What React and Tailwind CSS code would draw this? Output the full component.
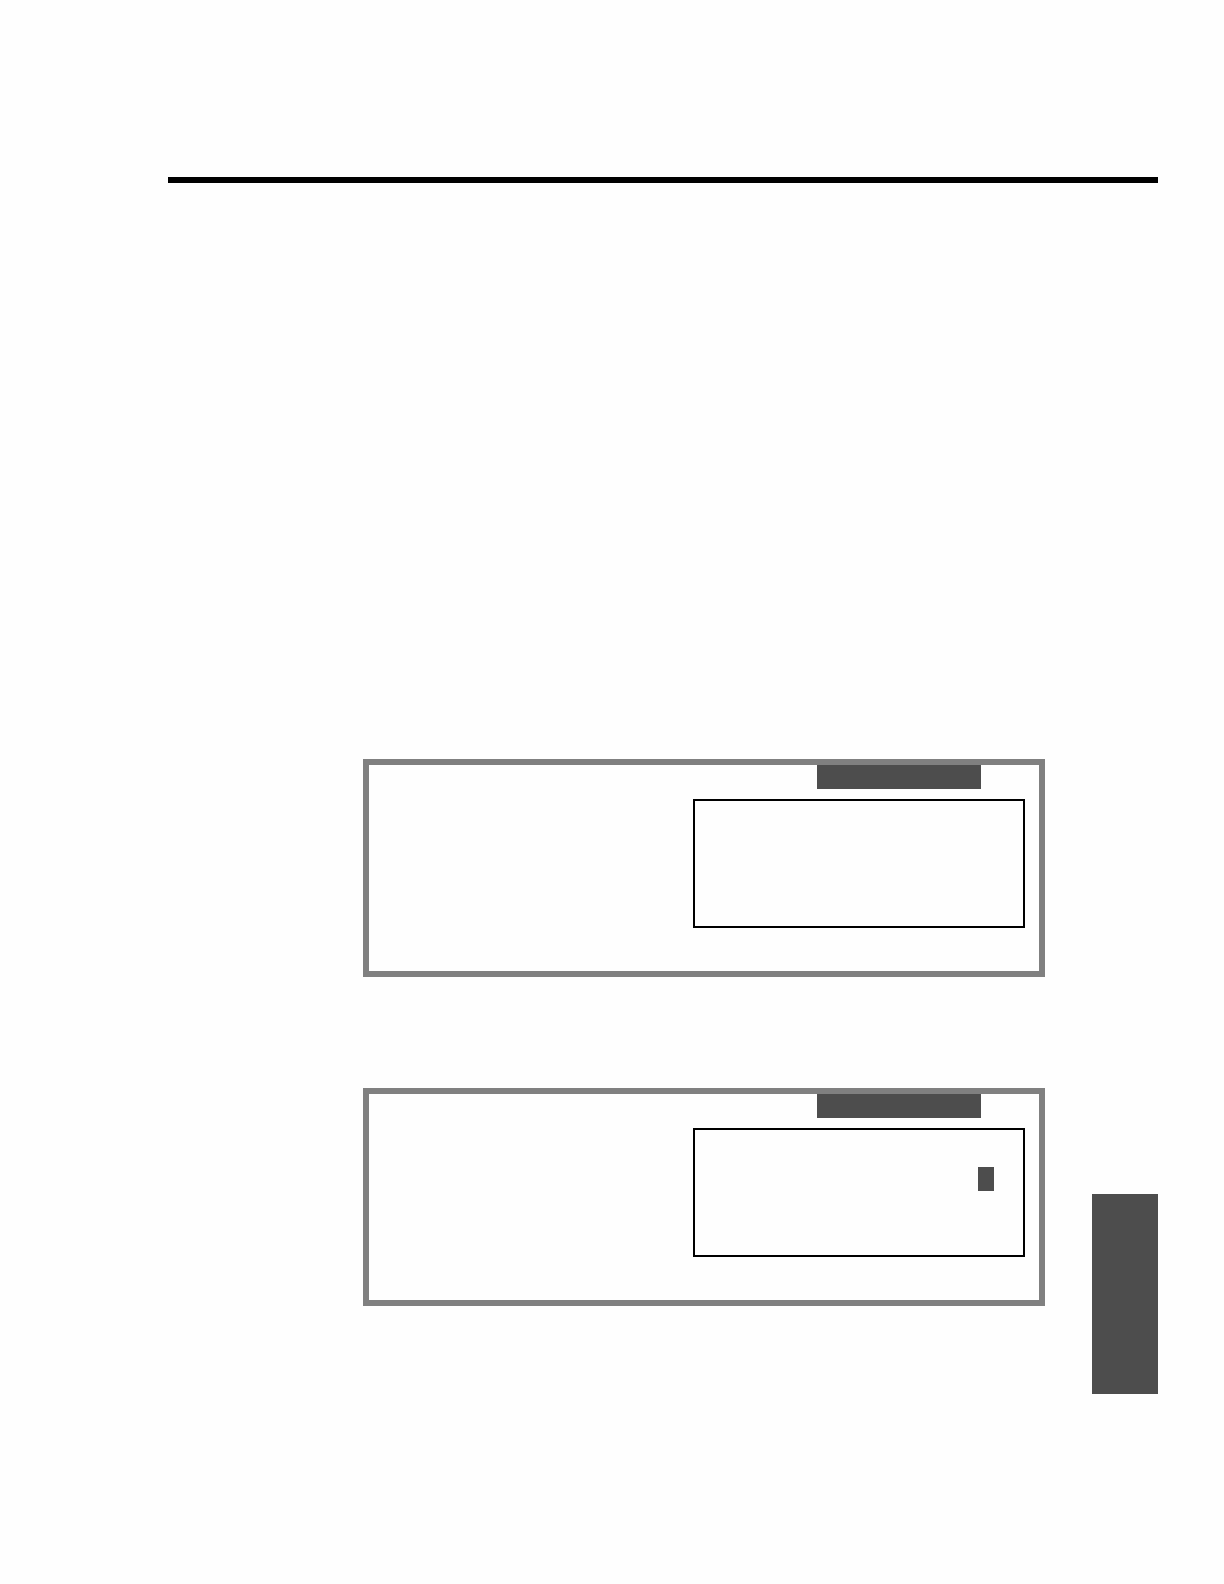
import React from 'react';

// One display panel: grey frame, dark title tab and a boxed area on the right
function Panel({ children }) {
  return (
    <section className="flex flex-col items-end border-6 border-[#808080] pb-[43px]">
      <div className="mr-[58px] h-6 w-[164px] bg-[#4d4d4d]"></div>
      <div className="mt-[10px] mr-[14px] flex h-[129px] w-[332px] justify-end border-2 border-black">
        {children}
      </div>
    </section>
  );
}

export default function App() {
  return (
    <div className="min-h-screen bg-[#fefefe] pt-[177px] pr-[66px] pb-[190px] pl-[168px]">
      <hr className="border-t-6 border-black" />

      <div className="mt-[576px] flex items-end gap-[47px] pl-[195px]">
        <main className="flex flex-1 flex-col gap-[111px] pb-[88px]">
          <Panel />
          <Panel>
            <div className="mt-[37px] mr-[29px] h-6 w-4 bg-[#4d4d4d]"></div>
          </Panel>
        </main>

        {/* chapter marker on the page edge */}
        <aside className="h-[200px] w-[66px] bg-[#4d4d4d]"></aside>
      </div>
    </div>
  );
}
